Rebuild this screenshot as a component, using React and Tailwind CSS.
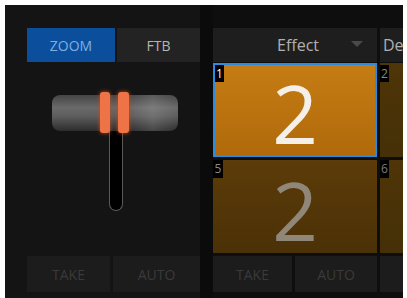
export default function App() {
  return (
    <div className="w-[407px] h-[298px] bg-white pt-[5px] pl-[5px] pr-[4px] flex font-['Open_Sans',sans-serif]">
      <div className="flex-1 bg-[#141414] flex overflow-hidden">
        {/* LEFT: transition controls */}
        <div className="w-[195px] pl-[22px] pt-[23px] flex flex-col">
          <div className="h-[34px] flex gap-[2px] text-[14px]">
            <div className="w-[88px] bg-[#0b4f9c] text-[#7eaee0] flex items-center justify-center">ZOOM</div>
            <div className="flex-1 bg-[#232323] text-[#b5b5b5] flex items-center justify-center">FTB</div>
          </div>

          {/* T-bar */}
          <div className="flex-1 flex flex-col items-center pt-[33px] pl-[3px]">
            <div className="relative w-[126px] h-[36px] rounded-[8px] bg-[linear-gradient(180deg,#444_0%,#6a6a6a_35%,#5c5c5c_60%,#2c2c2c_100%)]">
              <div className="absolute inset-0 rounded-[8px] bg-[linear-gradient(90deg,transparent_60%,rgba(255,255,255,0.12)_80%,transparent_100%)]" />
              <div className="absolute left-[48px] top-[-3px] w-[10px] h-[41px] rounded-[3px] bg-[#ee7448] shadow-[0_0_4px_#c44a20]" />
              <div className="absolute left-[66px] top-[-3px] w-[11px] h-[41px] rounded-[3px] bg-[#ee7448] shadow-[0_0_4px_#c44a20]" />
            </div>
            <div className="w-[14px] h-[80px] ml-[2px] bg-black border border-[#5a5a5a] border-t-0 rounded-b-full" />
          </div>

          <div className="h-[36px] mb-[6px] flex gap-[3px] text-[14px] text-[#3a3a3a]">
            <div className="w-[83px] bg-[#1c1c1c] flex items-center justify-center">TAKE</div>
            <div className="flex-1 bg-[#1c1c1c] flex items-center justify-center">AUTO</div>
          </div>
        </div>

        <div className="w-[13px] bg-[#0b0b0b]" />

        {/* RIGHT: effect bins */}
        <div className="flex-1 pt-[23px] flex gap-[3px] bg-[#0e0e0e] overflow-hidden">
          <div className="w-[164px] shrink-0 flex flex-col gap-[1px]">
            <div className="h-[34px] bg-[#1e1e1e] flex items-center justify-center relative text-[16px] text-[#b0b0b0]">
              <span className="ml-[6px]">Effect</span>
              <span className="absolute right-[14px] top-[13px] w-0 h-0 border-l-[6px] border-r-[6px] border-t-[6px] border-l-transparent border-r-transparent border-t-[#4a4a4a]" />
            </div>
            <div className="h-[94px] border-2 border-[#2b8ae2] bg-[linear-gradient(180deg,#c57c14,#b06a0a)] relative flex items-center justify-center">
              <span className="absolute left-0 top-0 w-[9px] h-[17px] bg-black text-white text-[12px] leading-[17px] text-center">1</span>
              <span className="text-[80px] font-normal text-[#f4f0e8] leading-[72px] pt-[6px]">2</span>
            </div>
            <div className="h-[93px] mt-[2px] bg-[linear-gradient(180deg,#5c3c09,#4b3107)] relative flex items-center justify-center">
              <span className="absolute left-0 top-0 w-[10px] h-[18px] bg-black text-[#8a8a8a] text-[12px] leading-[18px] text-center">5</span>
              <span className="text-[80px] font-normal text-[#908779] leading-[72px] pt-[6px]">2</span>
            </div>
            <div className="h-[36px] mt-[2px] flex gap-[3px] text-[14px] text-[#3a3a3a]">
              <div className="w-[79px] bg-[#1c1c1c] flex items-center justify-center">TAKE</div>
              <div className="flex-1 bg-[#1c1c1c] flex items-center justify-center">AUTO</div>
            </div>
          </div>

          <div className="w-[40px] shrink-0 flex flex-col gap-[1px]">
            <div className="h-[34px] bg-[#1e1e1e] flex items-center pl-[3px] text-[16px] text-[#b0b0b0] overflow-hidden whitespace-nowrap">De</div>
            <div className="h-[94px] bg-[linear-gradient(180deg,#4f3508,#453007)] relative">
              <span className="absolute left-0 top-[2px] w-[9px] h-[17px] bg-black text-[#8a8a8a] text-[12px] leading-[17px] text-center">2</span>
            </div>
            <div className="h-[93px] mt-[2px] bg-[linear-gradient(180deg,#4f3508,#453007)] relative">
              <span className="absolute left-0 top-0 w-[9px] h-[18px] bg-black text-[#7a7a7a] text-[12px] leading-[18px] text-center">6</span>
            </div>
            <div className="h-[36px] mt-[2px] bg-[#1c1c1c]" />
          </div>
        </div>
      </div>
    </div>
  );
}
